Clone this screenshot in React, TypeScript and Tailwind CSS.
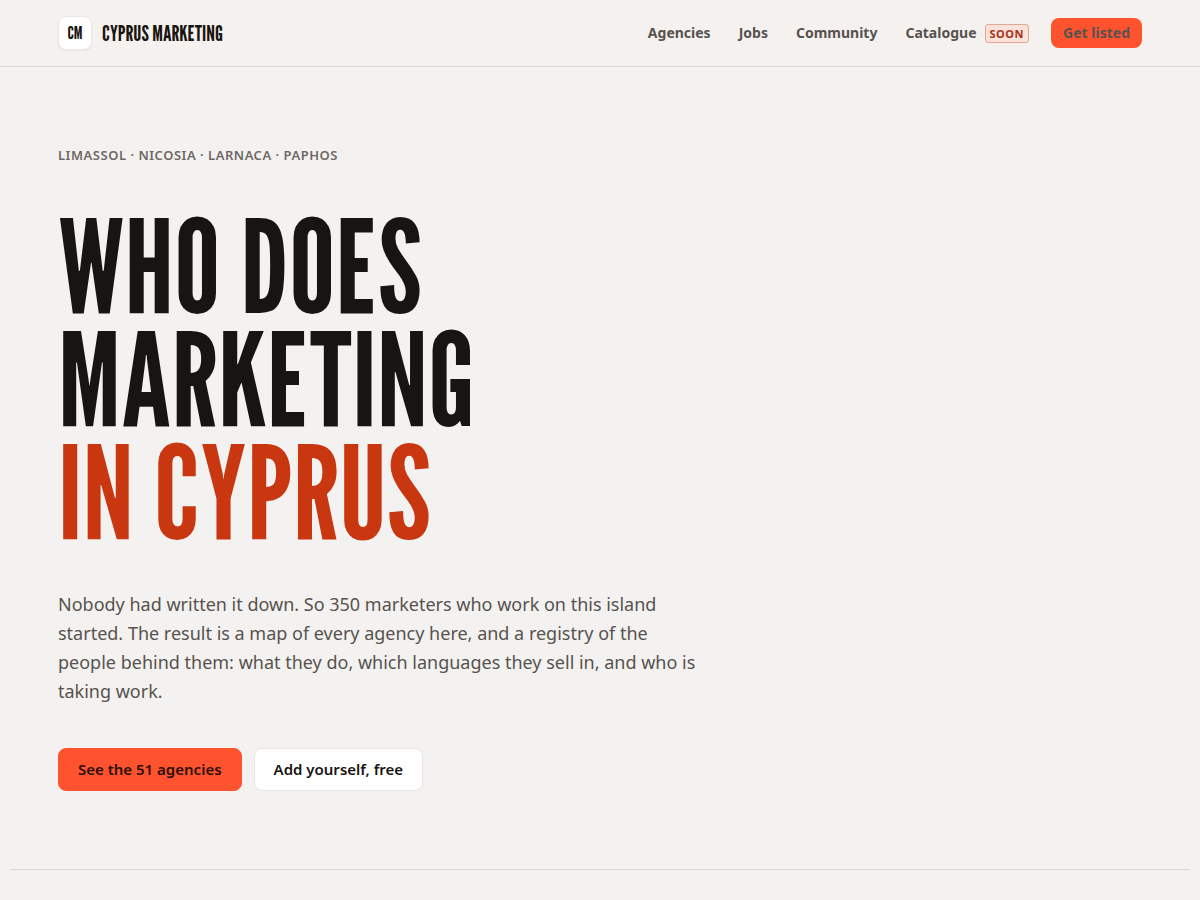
import React from 'react';

const NAV_LINKS = [
  { label: 'Agencies', href: '#agencies' },
  { label: 'Jobs', href: '#jobs' },
  { label: 'Community', href: '#community' },
  { label: 'Catalogue', href: '#catalogue', badge: 'Soon' },
];

const CITIES = ['Limassol', 'Nicosia', 'Larnaca', 'Paphos'];

const DISPLAY = "font-['League_Gothic','Roboto_Condensed','Liberation_Sans_Narrow','Liberation_Sans',sans-serif]";

function Header() {
  return (
    <header className="border-b border-[#d9d6d4] bg-[#f5f1ee]">
      <div className="mx-auto flex h-[66px] max-w-[1180px] items-center justify-between px-12">
        <a href="#top" className={`flex items-center gap-2.5 uppercase text-[#181411] ${DISPLAY}`}>
          <span className="flex size-[34px] items-center justify-center rounded-lg border border-[#ebe7e4] bg-white text-lg shadow-xs">
            CM
          </span>
          <span className="whitespace-nowrap text-[22px]">Cyprus Marketing</span>
        </a>

        <nav className="flex items-center gap-7 text-sm font-bold text-[#57524e]">
          {NAV_LINKS.map(link => (
            <a key={link.label} href={link.href} className="flex items-center gap-2 hover:text-[#181411]">
              {link.label}
              {link.badge && (
                <span className="-mr-1.5 rounded-[3px] border border-[#e2a698] bg-[#fae1d9] px-1 text-[11px] leading-[17px] font-bold tracking-wider text-[#a83218] uppercase">
                  {link.badge}
                </span>
              )}
            </a>
          ))}
          <a href="#get-listed" className="rounded-lg bg-[#ff5330] px-3 py-1 leading-[22px]">
            Get listed
          </a>
        </nav>
      </div>
    </header>
  );
}

export default function App() {
  return (
    <div id="top" className="min-h-screen bg-[#f4f2f0] font-['Noto_Sans',sans-serif] text-[#181411]">
      <Header />

      <main className="mx-auto max-w-[1180px]">
        {/* HERO */}
        <section className="border-b border-[#d9d6d4] px-12 py-[78px]">
          <p className="text-[13px] leading-5 font-semibold tracking-[0.04em] text-[#6e6864] uppercase">
            {CITIES.join(' · ')}
          </p>

          <h1 className={`mt-11 text-[130px] leading-[113px] uppercase ${DISPLAY}`}>
            Who does
            <br />
            Marketing
            <br />
            <span className="text-[#c8370f]">in Cyprus</span>
          </h1>

          <p className="mt-[42px] max-w-[645px] text-lg leading-[29px] text-[#57524e]">
            Nobody had written it down. So 350 marketers who work on this island started. The result is a map of
            every agency here, and a registry of the people behind them: what they do, which languages they sell in,
            and who is taking work.
          </p>

          <div className="mt-[42px] flex flex-wrap gap-3 text-[15px] leading-[21px] font-semibold">
            <a href="#agencies" className="rounded-lg border border-[#ff5330] bg-[#ff5330] px-[19px] py-2.5 text-[#2b0f08]">
              See the 51 agencies
            </a>
            <a href="#join" className="rounded-lg border border-[#e8e5e2] bg-white px-[19px] py-2.5">
              Add yourself, free
            </a>
          </div>
        </section>
      </main>
    </div>
  );
}
